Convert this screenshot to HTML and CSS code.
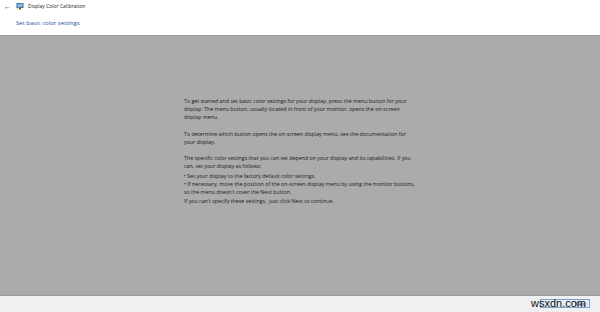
FILE: index.html
```html
<!DOCTYPE html>
<html lang="en">
<head>
    <meta charset="UTF-8">
    <title>Display Color Calibration</title>
    <link rel="stylesheet" href="styles.css">
</head>
<body>
    <div class="window">
        <div class="header">
            <div class="titlebar">
                <span class="back">&#8592;</span>
                <svg class="app-icon" width="8" height="8" viewBox="0 0 8 8">
                    <rect x="0.5" y="1" width="7" height="5" fill="#2a6fc9"/>
                    <rect x="1.5" y="2" width="5" height="3" fill="#7fb8f0"/>
                    <rect x="3" y="6" width="2" height="1.5" fill="#555"/>
                    <path d="M1 7.5 L7 0.5" stroke="#e8b020" stroke-width="1"/>
                </svg>
                <span class="title">Display Color Calibration</span>
            </div>
            <h1>Set basic color settings</h1>
        </div>
        <div class="content">
            <div class="text">
                <p>To get started and set basic color settings for your display, press the menu button for your<br>display. The menu button, usually located in front of your monitor, opens the on-screen<br>display menu.</p>
                <p class="gap">To determine which button opens the on-screen display menu, see the documentation for<br>your display.</p>
                <p class="gap2">The specific color settings that you can set depend on your display and its capabilities. If you<br>can, set your display as follows:</p>
                <p class="list">&bull; Set your display to the factory default color settings.<br>&bull; If necessary, move the position of the on-screen display menu by using the monitor buttons,<br>so the menu doesn't cover the Next button.</p>
                <p class="last">If you can't specify these settings,&nbsp; just click Next to continue.</p>
            </div>
        </div>
        <div class="footer">
            <div class="next">Next</div>
            <span class="mark">wsxdn.com</span>
        </div>
    </div>
</body>
</html>
```
FILE: styles.css
```css
body {
    margin: 0;
    font-family: "Open Sans", "Noto Sans", sans-serif;
    background: #ffffff;
}
.window {
    width: 600px;
    height: 312px;
    display: flex;
    flex-direction: column;
    overflow: hidden;
}
.header {
    height: 35px;
    background: #ffffff;
}
.titlebar {
    display: flex;
    align-items: center;
    height: 12px;
    padding-left: 4px;
    font-size: 5px;
    color: #222;
}
.back {
    font-size: 7px;
    width: 12px;
}
.app-icon {
    margin-right: 4px;
}
h1 {
    margin: 7px 0 0 16px;
    font-size: 6px;
    font-weight: normal;
    color: #1d4fa0;
}
.content {
    flex: 1;
    background: #ababab;
    border-top: 1px solid #9e9e9e;
    display: flex;
    justify-content: center;
}
.text {
    width: 228px;
    margin-right: 4px;
    padding-top: 61px;
    font-size: 5.3px;
    line-height: 8px;
    color: #1a1a1a;
    white-space: nowrap;
}
.text p {
    margin: 0;
}
.text .gap {
    margin-top: 9px;
}
.text .gap2 {
    margin-top: 8px;
}
.text .list {
    margin-top: 2px;
}
.text .last {
    margin-top: 1px;
}
.footer {
    height: 16px;
    background: #f0f0f0;
    border-top: 1px solid #9a9a9a;
    position: relative;
}
.next {
    position: absolute;
    right: 10px;
    top: 3px;
    width: 50px;
    height: 9px;
    border: 1px solid #7aa0d0;
    background: #e5eef8;
    font-size: 5px;
    line-height: 9px;
    text-align: right;
    padding-right: 3px;
    box-sizing: border-box;
    color: #444;
}
.mark {
    position: absolute;
    right: 14px;
    top: 0;
    font-family: "Liberation Sans", Arial, sans-serif;
    font-size: 11px;
    line-height: 14px;
    color: #111;
}
```
